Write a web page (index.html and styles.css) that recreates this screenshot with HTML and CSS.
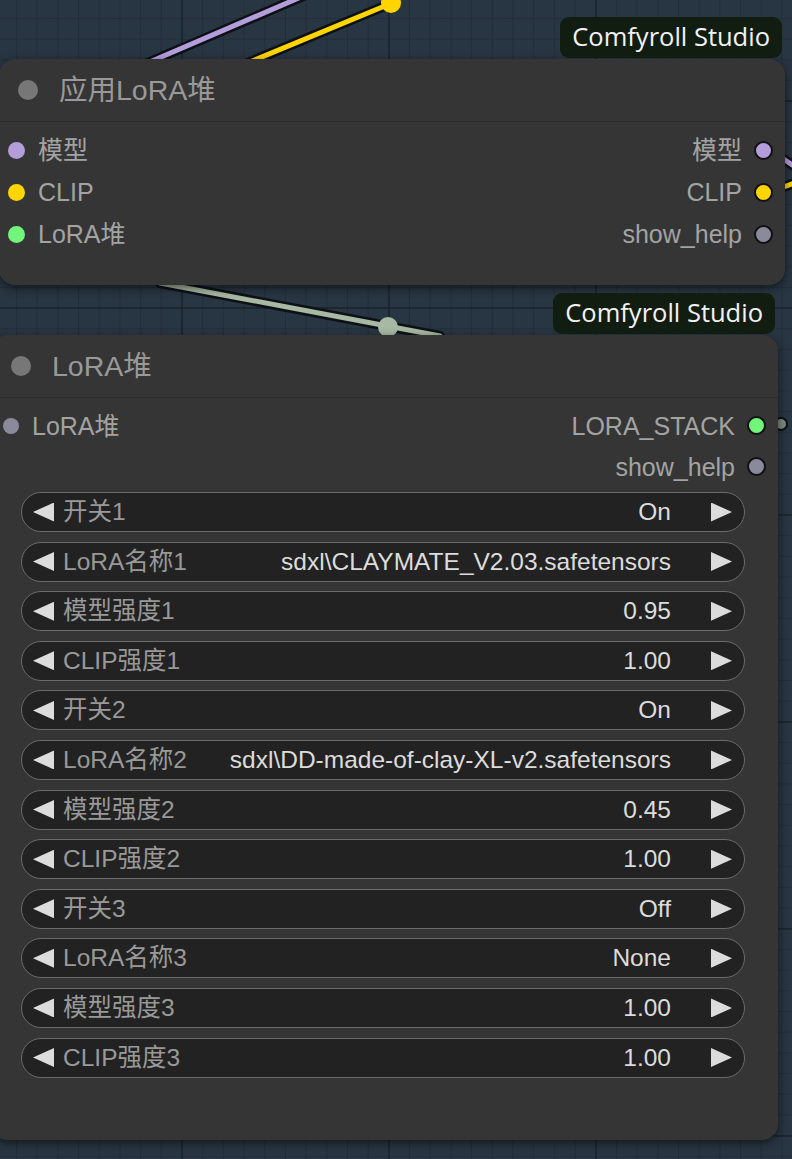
FILE: index.html
```html
<!DOCTYPE html>
<html lang="zh">
<head>
<meta charset="utf-8">
<title>LoRA堆</title>
<link rel="stylesheet" href="styles.css">
</head>
<body>
<div class="canvas">
  <svg class="links" width="792" height="1159" viewBox="0 0 792 1159">
    <g stroke-linecap="round">
      <line x1="145" y1="64" x2="308" y2="-6" stroke="#0d1116" stroke-width="10"/>
      <line x1="145" y1="64" x2="308" y2="-6" stroke="#b39ddb" stroke-width="5"/>
      <line x1="245" y1="64" x2="392" y2="3" stroke="#0d1116" stroke-width="10"/>
      <line x1="245" y1="64" x2="392" y2="3" stroke="#ffd500" stroke-width="5"/>
      <circle cx="391" cy="3" r="10" fill="#ffd500"/>
      <line x1="160" y1="283" x2="440" y2="336" stroke="#0d1116" stroke-width="10"/>
      <line x1="160" y1="283" x2="440" y2="336" stroke="#a7b8a3" stroke-width="5"/>
      <circle cx="388" cy="327" r="10" fill="#a7b8a3"/>
      <line x1="770" y1="150" x2="800" y2="170" stroke="#0d1116" stroke-width="10"/>
      <line x1="770" y1="150" x2="800" y2="170" stroke="#b39ddb" stroke-width="5"/>
      <line x1="770" y1="192" x2="800" y2="181" stroke="#0d1116" stroke-width="10"/>
      <line x1="770" y1="192" x2="800" y2="181" stroke="#ffd500" stroke-width="5"/>
      <circle cx="781" cy="424" r="6" fill="#7d8a7b" stroke="#0d1116" stroke-width="2"/>
    </g>
  </svg>

  <section class="node n1">
    <div class="badge">Comfyroll Studio</div>
    <header class="title"><span class="tdot"></span><span class="ttext">应用LoRA堆</span></header>
    <div class="slots">
      <div class="col in">
        <div class="slot"><span class="dot c-model"></span><span class="st">模型</span></div>
        <div class="slot"><span class="dot c-clip"></span><span class="st">CLIP</span></div>
        <div class="slot"><span class="dot c-lora"></span><span class="st">LoRA堆</span></div>
      </div>
      <div class="col out">
        <div class="slot"><span class="st">模型</span><span class="dot c-model"></span></div>
        <div class="slot"><span class="st">CLIP</span><span class="dot c-clip"></span></div>
        <div class="slot"><span class="st">show_help</span><span class="dot c-help"></span></div>
      </div>
    </div>
  </section>

  <section class="node n2">
    <div class="badge">Comfyroll Studio</div>
    <header class="title"><span class="tdot"></span><span class="ttext">LoRA堆</span></header>
    <div class="slots s2">
      <div class="col in">
        <div class="slot"><span class="dot c-help"></span><span class="st">LoRA堆</span></div>
      </div>
      <div class="col out">
        <div class="slot"><span class="st">LORA_STACK</span><span class="dot c-lora"></span></div>
        <div class="slot"><span class="st">show_help</span><span class="dot c-help"></span></div>
      </div>
    </div>
    <div class="widgets">
      <div class="widget"><span class="al"></span><span class="wl">开关1</span><span class="wv">On</span><span class="ar"></span></div>
      <div class="widget"><span class="al"></span><span class="wl">LoRA名称1</span><span class="wv">sdxl\CLAYMATE_V2.03.safetensors</span><span class="ar"></span></div>
      <div class="widget"><span class="al"></span><span class="wl">模型强度1</span><span class="wv">0.95</span><span class="ar"></span></div>
      <div class="widget"><span class="al"></span><span class="wl">CLIP强度1</span><span class="wv">1.00</span><span class="ar"></span></div>
      <div class="widget"><span class="al"></span><span class="wl">开关2</span><span class="wv">On</span><span class="ar"></span></div>
      <div class="widget"><span class="al"></span><span class="wl">LoRA名称2</span><span class="wv">sdxl\DD-made-of-clay-XL-v2.safetensors</span><span class="ar"></span></div>
      <div class="widget"><span class="al"></span><span class="wl">模型强度2</span><span class="wv">0.45</span><span class="ar"></span></div>
      <div class="widget"><span class="al"></span><span class="wl">CLIP强度2</span><span class="wv">1.00</span><span class="ar"></span></div>
      <div class="widget"><span class="al"></span><span class="wl">开关3</span><span class="wv">Off</span><span class="ar"></span></div>
      <div class="widget"><span class="al"></span><span class="wl">LoRA名称3</span><span class="wv">None</span><span class="ar"></span></div>
      <div class="widget"><span class="al"></span><span class="wl">模型强度3</span><span class="wv">1.00</span><span class="ar"></span></div>
      <div class="widget"><span class="al"></span><span class="wl">CLIP强度3</span><span class="wv">1.00</span><span class="ar"></span></div>
    </div>
  </section>
</div>
</body>
</html>
```

FILE: styles.css
```css
* { box-sizing: border-box; }
html, body { margin: 0; padding: 0; }
body {
  width: 792px;
  height: 1159px;
  overflow: hidden;
  font-family: "Liberation Sans", Arial, "Noto Sans CJK SC", sans-serif;
}
.canvas {
  position: relative;
  width: 792px;
  height: 1159px;
  overflow: hidden;
  background-color: #283542;
  background-image:
    linear-gradient(to right, rgba(18, 26, 34, 0.45) 2px, transparent 2px),
    linear-gradient(to bottom, rgba(18, 26, 34, 0.45) 2px, transparent 2px),
    linear-gradient(to right, rgba(22, 30, 38, 0.3) 1px, transparent 1px),
    linear-gradient(to bottom, rgba(22, 30, 38, 0.3) 1px, transparent 1px);
  background-size: 207px 207px, 207px 207px, 20.7px 20.7px, 20.7px 20.7px;
  background-position: 181px 100px, 181px 100px, 16px 18px, 16px 18px;
}
.links {
  position: absolute;
  left: 0;
  top: 0;
}
.node {
  position: absolute;
  width: 786px;
  background: #353535;
  border-radius: 16px;
  box-shadow: 0 3px 10px rgba(0, 0, 0, 0.55);
  display: flex;
  flex-direction: column;
}
.n1 { left: -1px; top: 59px; height: 226px; }
.n2 { left: -8px; top: 335px; height: 805px; }
.badge {
  position: absolute;
  right: 3px;
  top: -42px;
  height: 41px;
  padding: 0 12px;
  background: #121d12;
  border-radius: 9px;
  color: #f2f2f2;
  font-family: "Open Sans", "Noto Sans", sans-serif;
  font-size: 25.5px;
  line-height: 39px;
  white-space: nowrap;
}
.title {
  height: 63px;
  display: flex;
  align-items: center;
  padding-left: 19px;
  border-bottom: 1.5px solid #2a2a2a;
}
.tdot {
  width: 20px;
  height: 20px;
  border-radius: 50%;
  background: #777;
  margin-right: 21px;
  flex: none;
}
.ttext {
  color: #999;
  font-size: 28.5px;
  line-height: 30px;
}
.slots {
  display: flex;
  justify-content: space-between;
  padding: 7px 12px 0 9px;
}
.s2 { padding: 7px 12px 0 11px; }
.col { display: flex; flex-direction: column; }
.slot {
  height: 42px;
  display: flex;
  align-items: center;
  color: #a3a3a3;
  font-size: 25px;
  white-space: nowrap;
}
.st { line-height: 26px; }
.s2 .slot { height: 41px; }
.in .slot .dot { margin-right: 13px; }
.out .slot { justify-content: flex-end; }
.out .slot .dot { margin-left: 12px; border: 2px solid #111; width: 19px; height: 19px; }
.dot {
  width: 17px;
  height: 17px;
  border-radius: 50%;
  flex: none;
}
.s2 .in .dot { width: 16px; height: 16px; margin-right: 13px; }
.c-model { background: #b39ddb; }
.c-clip { background: #ffd500; }
.c-lora { background: #72f57b; }
.c-help { background: #8b899c; }
.widgets {
  display: flex;
  flex-direction: column;
  gap: 9.6px;
  padding: 5px 33px 0 29px;
}
.widget {
  height: 40px;
  display: flex;
  align-items: center;
  background: #222;
  border: 1.5px solid #6b6b6b;
  border-radius: 20px;
  padding: 0 12px 0 11px;
  font-size: 24.5px;
  white-space: nowrap;
}
.al, .ar {
  width: 21px;
  height: 19px;
  background: #dcdcdc;
  flex: none;
}
.al { clip-path: polygon(0 50%, 100% 0, 100% 100%); }
.ar { clip-path: polygon(0 0, 100% 50%, 0 100%); }
.wl {
  color: #999;
  margin-left: 9px;
  flex: none;
  line-height: 26px;
}
.wv {
  color: #dcdcdc;
  margin-left: auto;
  margin-right: 40px;
  line-height: 26px;
}
```
